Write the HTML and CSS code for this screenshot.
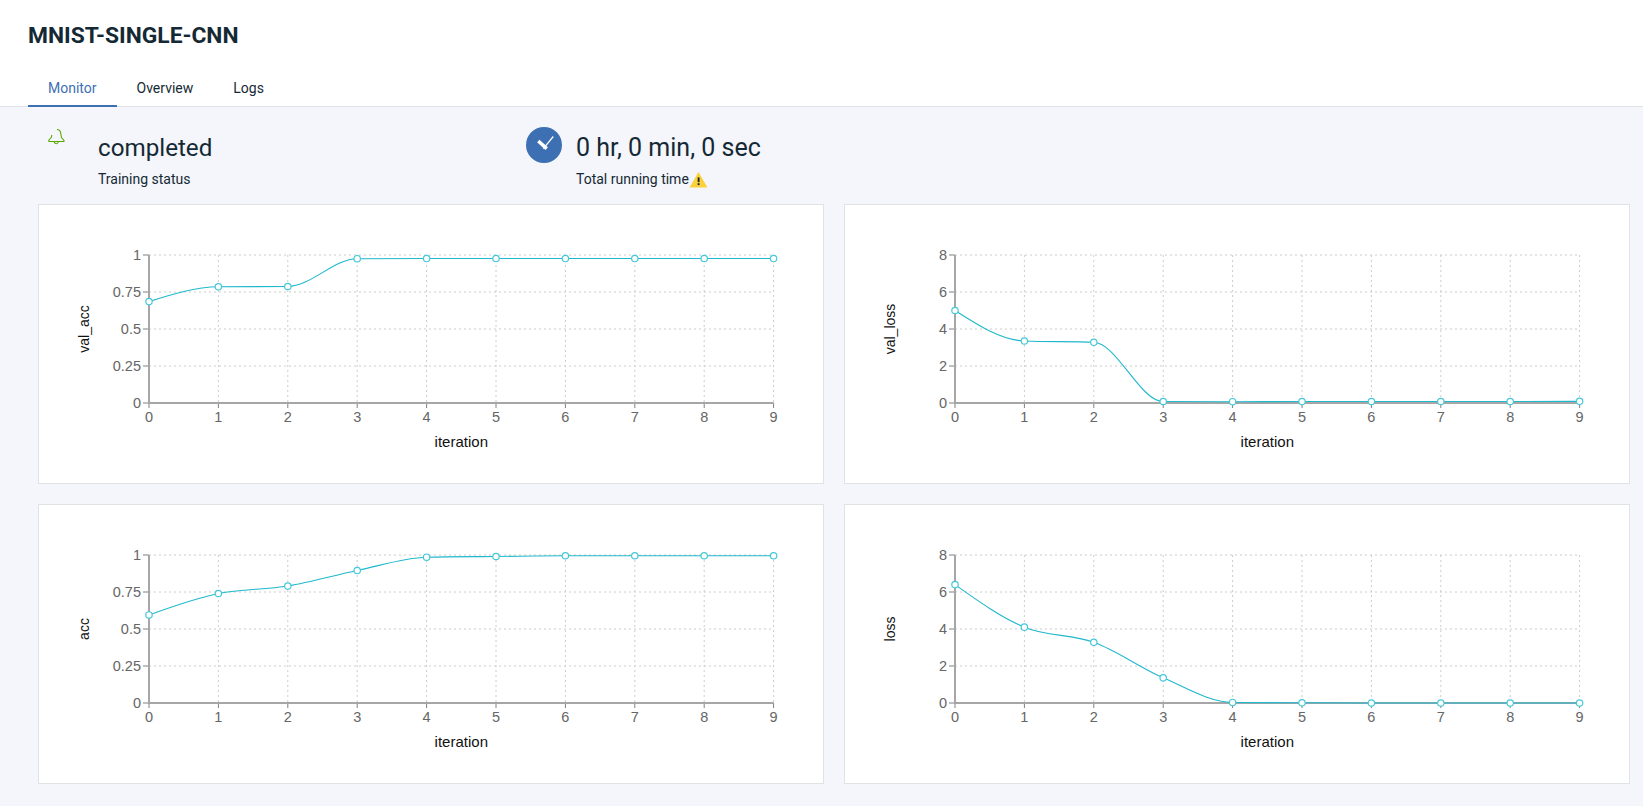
FILE: index.html
```html
<!DOCTYPE html>
<html lang="en">
<head>
  <meta charset="UTF-8" />
  <title>MNIST-SINGLE-CNN</title>
  <link rel="stylesheet" href="styles.css">
</head>
<body>

  <header class="page-header">
    <h1>MNIST-SINGLE-CNN</h1>
    <nav class="tabs">
      <a class="tab active" href="#">Monitor</a>
      <a class="tab" href="#">Overview</a>
      <a class="tab" href="#">Logs</a>
    </nav>
  </header>

  <main class="content">
    <section class="summary">
      <div class="stat stat-status">
        <svg class="bell" width="18" height="17" viewBox="0 0 18 17">
          <path d="M9 0.5 Q12 0.5 12.7 4 L13.5 8.5 L16 11.5 Q16.5 12.5 15 12.5 L2 12.5 Q0 12.5 1 11 L3.5 8 L3.8 6" />
          <path d="M6 13 Q8.2 16.5 10.5 13" />
        </svg>
        <div class="stat-text">
          <div class="stat-value">completed</div>
          <div class="stat-label">Training status</div>
        </div>
      </div>
      <div class="stat stat-time">
        <svg class="clock" width="36" height="36" viewBox="0 0 36 36">
          <circle cx="18" cy="18" r="18" />
          <path class="hand-long" d="M17.3 21.6 L27.3 9.5" />
          <path class="hand-short" d="M12.3 14 L20.7 21.6" />
        </svg>
        <div class="stat-text">
          <div class="stat-value">0 hr, 0 min, 0 sec</div>
          <div class="stat-label">Total running time<svg class="warn" width="19" height="17" viewBox="0 0 18 16"><path d="M9 1 L17.5 15.5 L0.5 15.5 Z" /><rect x="8.2" y="6" width="1.8" height="4.5" /><rect x="8.2" y="11.5" width="1.8" height="1.8" /></svg></div>
        </div>
      </div>
    </section>

    <section class="charts">
      <div class="card" data-label="val_acc" data-max="1" data-ticks="0,0.25,0.5,0.75,1" data-values="0.685,0.785,0.787,0.975,0.976,0.976,0.976,0.976,0.976,0.976"></div>
      <div class="card" data-label="val_loss" data-max="8" data-ticks="0,2,4,6,8" data-values="5,3.35,3.28,0.08,0.07,0.08,0.08,0.08,0.08,0.09"></div>
      <div class="card" data-label="acc" data-max="1" data-ticks="0,0.25,0.5,0.75,1" data-values="0.595,0.74,0.79,0.895,0.985,0.99,0.995,0.995,0.995,0.995"></div>
      <div class="card" data-label="loss" data-max="8" data-ticks="0,2,4,6,8" data-values="6.4,4.1,3.28,1.36,0.03,0.01,0,0,0,0"></div>
    </section>
  </main>

  <script src="charts.js"></script>
</body>
</html>
```

FILE: styles.css
```css
* {
  box-sizing: border-box;
}

body {
  margin: 0;
  font-family: Roboto, Arial, sans-serif;
  color: #152935;
  background: #f4f6fb;
  min-height: 100vh;
}

.page-header {
  background: white;
  height: 107px;
  padding: 21px 28px 0;
  border-bottom: 1px solid #dfe3e6;
}

h1 {
  margin: 0;
  font-size: 22.8px;
  line-height: 30px;
  font-weight: 700;
}

.tabs {
  display: flex;
  margin-top: 20px;
}

.tab {
  height: 36px;
  padding: 7px 20px 0;
  font-size: 14px;
  line-height: 20px;
  color: #152935;
  text-decoration: none;
}

.tab.active {
  color: #3d70b2;
  border-bottom: 2px solid #3d70b2;
}

.content {
  padding: 0 13px 0 38px;
}

.summary {
  display: flex;
  height: 97px;
}

.stat {
  display: flex;
}

.stat-status {
  width: 488px;
}

.stat-status .bell {
  margin: 22px 0 0 10px;
}

.stat-text {
  padding-top: 24px;
}

.stat-status .stat-text {
  margin-left: 32px;
}

.stat-time .stat-text {
  margin-left: 14px;
}

.stat-value {
  font-size: 24.2px;
  line-height: 34px;
}

.stat-time .stat-value {
  font-size: 25px;
}

.stat-label {
  font-size: 14px;
  line-height: 20px;
  margin-top: 4px;
  display: flex;
  align-items: center;
}

.bell path {
  fill: none;
  stroke: #5aa700;
  stroke-width: 1.1;
}

.clock {
  margin-top: 20px;
}

.clock circle {
  fill: #3d70b2;
}

.clock path {
  fill: none;
  stroke: white;
}

.hand-long {
  stroke-width: 1.2;
}

.hand-short {
  stroke-width: 3.5;
}

.warn path {
  fill: #fdd13a;
}

.warn rect {
  fill: #152935;
}

.charts {
  display: grid;
  grid-template-columns: 786px 786px;
  grid-template-rows: 280px 280px;
  gap: 20px;
}

.card {
  background: white;
  border: 1px solid #dfe3e6;
  overflow: hidden;
}

.card svg {
  display: block;
}

.grid-line {
  stroke: #cccccc;
  stroke-dasharray: 2 3;
}

.axis-line {
  stroke: #a6a6a6;
  stroke-width: 2;
}

.tick-mark {
  stroke: #808080;
}

.tick-label {
  font-family: "Liberation Sans", Arial, sans-serif;
  font-size: 14.5px;
  fill: #666666;
}

.axis-label {
  font-family: "Liberation Sans", Arial, sans-serif;
  font-size: 15px;
  fill: #111111;
}

.axis-label.vertical {
  font-size: 14px;
}

.curve {
  fill: none;
  stroke: #1fb8cc;
  stroke-width: 1.1;
}

.dot {
  fill: white;
  stroke: #45c8d8;
  stroke-width: 1.2;
}
```

FILE: charts.js
```js
const NS = "http://www.w3.org/2000/svg";
const LEFT = 110, TOP = 50, STEP = 69.4, PLOT_H = 148;

function el(parent, name, attrs, text) {
  const node = document.createElementNS(NS, name);
  for (const key in attrs) node.setAttribute(key, attrs[key]);
  if (text !== undefined) node.textContent = text;
  parent.appendChild(node);
  return node;
}

// monotone x interpolation, same curve the chart library uses
function monotonePath(pts) {
  const n = pts.length;
  const slope = [];
  for (let i = 0; i < n - 1; i++) {
    slope.push((pts[i + 1][1] - pts[i][1]) / (pts[i + 1][0] - pts[i][0]));
  }
  const tan = [slope[0]];
  for (let i = 1; i < n - 1; i++) {
    const a = slope[i - 1], b = slope[i];
    const sign = (Math.sign(a) + Math.sign(b)) || 0;
    tan.push(sign * Math.min(Math.abs(a), Math.abs(b), 0.25 * Math.abs(a + b)) || 0);
  }
  tan.push(slope[n - 2]);
  tan[0] = (3 * slope[0] - tan[1]) / 2;
  tan[n - 1] = (3 * slope[n - 2] - tan[n - 2]) / 2;

  let d = "M" + pts[0][0] + " " + pts[0][1];
  for (let i = 0; i < n - 1; i++) {
    const dx = (pts[i + 1][0] - pts[i][0]) / 3;
    d += " C" + (pts[i][0] + dx) + " " + (pts[i][1] + dx * tan[i]) + " " +
      (pts[i + 1][0] - dx) + " " + (pts[i + 1][1] - dx * tan[i + 1]) + " " +
      pts[i + 1][0] + " " + pts[i + 1][1];
  }
  return d;
}

document.querySelectorAll(".card").forEach(card => {
  const values = card.dataset.values.split(",").map(Number);
  const ticks = card.dataset.ticks.split(",");
  const max = Number(card.dataset.max);
  const y = v => TOP + PLOT_H - (v / max) * PLOT_H;
  const x = i => LEFT + i * STEP;
  const right = x(9);
  const bottom = TOP + PLOT_H;

  const svg = el(card, "svg", { width: card.clientWidth, height: card.clientHeight });

  ticks.forEach(t => {
    if (Number(t) > 0) el(svg, "line", { class: "grid-line", x1: LEFT, x2: right, y1: y(t), y2: y(t) });
    el(svg, "line", { class: "tick-mark", x1: LEFT - 6, x2: LEFT, y1: y(t), y2: y(t) });
    el(svg, "text", { class: "tick-label", x: LEFT - 8, y: y(t) + 5, "text-anchor": "end" }, t);
  });
  values.forEach((v, i) => {
    if (i > 0) el(svg, "line", { class: "grid-line", x1: x(i), x2: x(i), y1: TOP, y2: bottom });
    el(svg, "line", { class: "tick-mark", x1: x(i), x2: x(i), y1: bottom, y2: bottom + 5 });
    el(svg, "text", { class: "tick-label", x: x(i), y: bottom + 19, "text-anchor": "middle" }, i);
  });
  el(svg, "line", { class: "axis-line", x1: LEFT, x2: LEFT, y1: TOP, y2: bottom });
  el(svg, "line", { class: "axis-line", x1: LEFT, x2: right, y1: bottom, y2: bottom });

  const pts = values.map((v, i) => [x(i), y(v)]);
  el(svg, "path", { class: "curve", d: monotonePath(pts) });
  pts.forEach(p => el(svg, "circle", { class: "dot", cx: p[0], cy: p[1], r: 3.2 }));

  el(svg, "text", { class: "axis-label", x: (LEFT + right) / 2, y: bottom + 44, "text-anchor": "middle" }, "iteration");
  const midY = TOP + PLOT_H / 2;
  el(svg, "text", { class: "axis-label vertical", x: 0, y: 0, "text-anchor": "middle", transform: "translate(50 " + midY + ") rotate(-90)" }, card.dataset.label);
});
```
